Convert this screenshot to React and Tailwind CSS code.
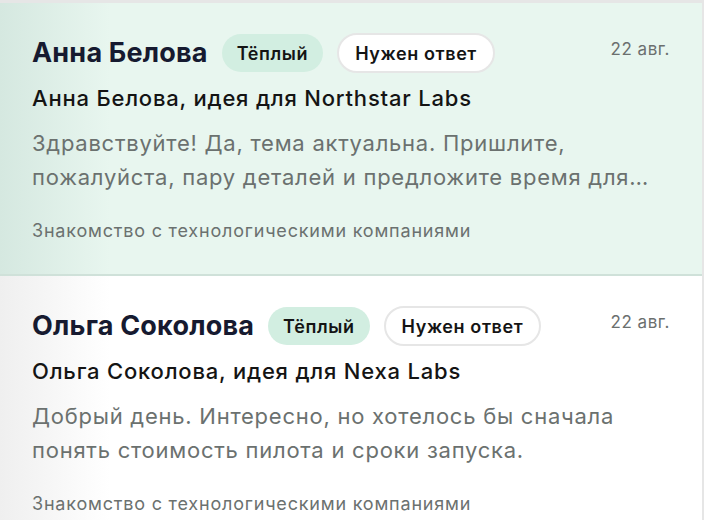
import React from "react";

const items = [
  {
    name: "Анна Белова",
    subject: "Анна Белова, идея для Northstar Labs",
    preview:
      "Здравствуйте! Да, тема актуальна. Пришлите, пожалуйста, пару деталей и предложите время для…",
    date: "22 авг.",
    active: true,
  },
  {
    name: "Ольга Соколова",
    subject: "Ольга Соколова, идея для Nexa Labs",
    preview:
      "Добрый день. Интересно, но хотелось бы сначала понять стоимость пилота и сроки запуска.",
    date: "22 авг.",
    active: false,
  },
];

function Card({ item }) {
  return (
    <div
      className={
        item.active
          ? "border-b-2 border-[#cfe1d9] bg-[linear-gradient(to_right,#d5e8e0,#e8f6ef_110px)] pl-8 pr-8 pt-[30px] pb-[33px]"
          : "border-b-2 border-[#e6e6e6] bg-[linear-gradient(to_right,#efefef,#ffffff_110px)] pl-8 pr-8 pt-[30px] pb-[33px]"
      }
    >
      <div className="flex items-start justify-between">
        <div className="flex items-center gap-[14px]">
          <span className="text-[27px] font-bold leading-[40px] text-[#161a30] tracking-[0.2px]">
            {item.name}
          </span>
          <span className="flex h-[38px] items-center rounded-full bg-[#d2eee1] px-[15px] text-[18px] font-semibold tracking-[0.6px] text-[#141414]">
            Тёплый
          </span>
          <span className="flex h-[40px] items-center rounded-full border-2 border-[#e6e6e6] bg-white px-[16px] text-[18px] font-semibold tracking-[0.6px] text-[#141414]">
            Нужен ответ
          </span>
        </div>
        <span className="mt-[5px] text-[17px] leading-[22px] tracking-[0.5px] text-[#6b6f6e]">{item.date}</span>
      </div>
      <div className="mt-[13px] text-[22px] font-medium leading-[24px] tracking-[0.8px] text-[#141414]">
        {item.subject}
      </div>
      <div className="mt-[16px] line-clamp-2 text-[22px] leading-[34px] tracking-[0.75px] text-[#6b716f]">
        {item.preview}
      </div>
      <div className="mt-[27px] text-[18px] leading-[20px] tracking-[0.8px] text-[#6b716f]">
        Знакомство с технологическими компаниями
      </div>
    </div>
  );
}

export default function App() {
  return (
    <div
      className="h-[520px] w-[704px] overflow-hidden border-r-2 border-t-[3px] border-[#e6e6e6] bg-white"
      style={{ fontFamily: "Inter, 'Noto Sans', sans-serif" }}
    >
      {items.map((it, i) => (
        <Card key={i} item={it} />
      ))}
    </div>
  );
}
